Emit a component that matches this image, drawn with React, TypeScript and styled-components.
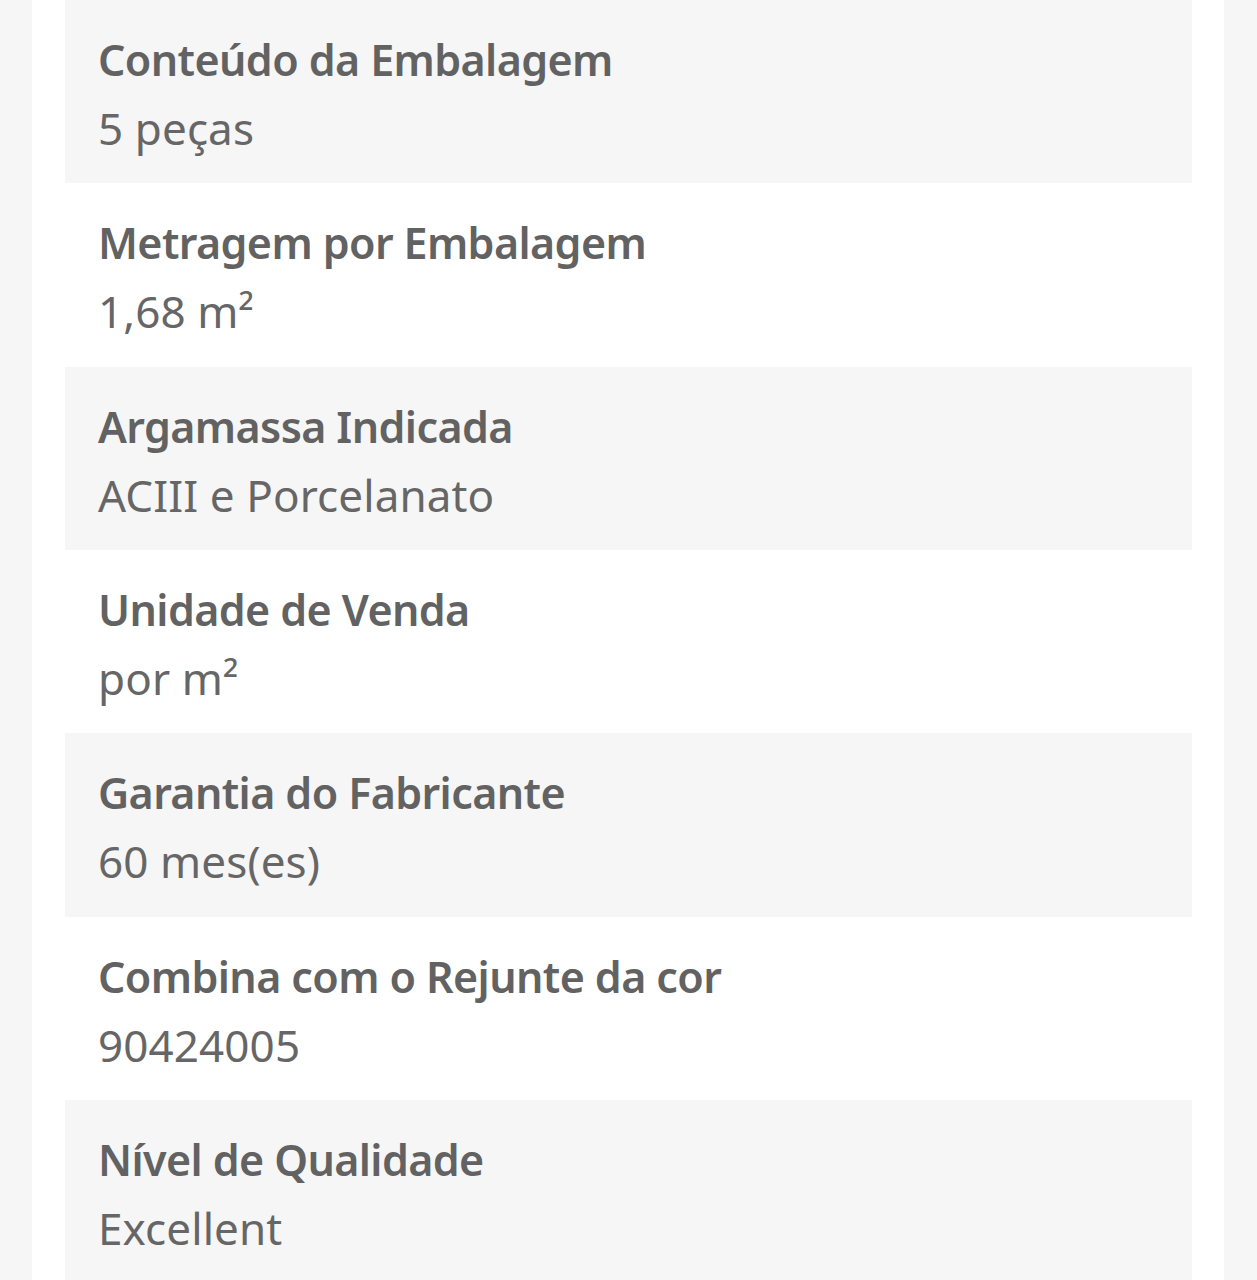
import React from "react";
import styled, { createGlobalStyle } from "styled-components";

const Global = createGlobalStyle`
  html, body { margin: 0; padding: 0; background: #f6f6f6; }
  body { font-family: "Noto Sans", "Open Sans", sans-serif; }
`;

const Page = styled.div`
  display: flex;
  justify-content: flex-start;
  padding-left: 32px;
  min-height: 1280px;
  overflow: hidden;
`;

const Panel = styled.div`
  width: 1192px;
  background: #ffffff;
  padding: 0 32px 0 33px;
  box-sizing: border-box;
  display: flex;
  flex-direction: column;
`;

const Row = styled.div<{ $shaded: boolean }>`
  height: 183.33px;
  box-sizing: border-box;
  padding: 26px 33px 0;
  background: ${(p) => (p.$shaded ? "#f6f6f6" : "#ffffff")};
  display: flex;
  flex-direction: column;
`;

const Label = styled.div`
  font-size: 43px;
  line-height: 68px;
  font-weight: 600;
  color: #626262;
  letter-spacing: -0.6px;
`;

const Value = styled.div`
  font-size: 44px;
  line-height: 68px;
  font-weight: 400;
  color: #666666;
  letter-spacing: 0.1px;
`;

const items = [
  ["Conteúdo da Embalagem", "5 peças"],
  ["Metragem por Embalagem", "1,68 m²"],
  ["Argamassa Indicada", "ACIII e Porcelanato"],
  ["Unidade de Venda", "por m²"],
  ["Garantia do Fabricante", "60 mes(es)"],
  ["Combina com o Rejunte da cor", "90424005"],
  ["Nível de Qualidade", "Excellent"],
];

export default function App() {
  return (
    <>
      <Global />
      <Page>
        <Panel>
          {items.map(([l, v], i) => (
            <Row key={l} $shaded={i % 2 === 0}>
              <Label>{l}</Label>
              <Value>{v}</Value>
            </Row>
          ))}
        </Panel>
      </Page>
    </>
  );
}
